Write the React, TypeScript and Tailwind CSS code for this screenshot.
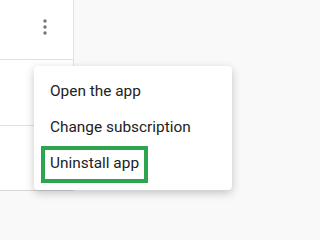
import React from "react";

export default function App() {
  return (
    <div
      className="relative w-full min-w-[269px] h-screen min-h-[229px] bg-[#f9f9f9] overflow-hidden"
      style={{ fontFamily: "Roboto, 'Liberation Sans', sans-serif" }}
    >
      <div className="w-[74px] bg-white border-r border-[#e3e3e3] flex flex-col">
        <div className="h-[60px] border-b border-[#e0e0e0] flex items-start justify-end pr-[26px] pt-[19px]">
          <svg width="4" height="16" viewBox="0 0 4 16">
            <circle cx="2" cy="2" r="1.7" fill="#757575" />
            <circle cx="2" cy="8" r="1.7" fill="#757575" />
            <circle cx="2" cy="14" r="1.7" fill="#757575" />
          </svg>
        </div>
        <div className="h-[66px] border-b border-[#e0e0e0]" />
        <div className="h-[65px] border-b border-[#d6d6d6]" />
      </div>

      <div className="absolute left-[34px] top-[66px] w-[198px] h-[124px] bg-white rounded-[4px] shadow-[0_3px_10px_rgba(0,0,0,0.22)] py-[8px] text-[15.4px] text-[#222222]">
        <div className="h-[36px] flex items-center pl-[16px]">Open the app</div>
        <div className="h-[36px] flex items-center pl-[16px]">Change subscription</div>
        <div className="h-[36px] flex items-center pl-[7px]">
          <span className="h-[37px] flex items-center border-[4px] border-[#2ea44f] px-[5px]">
            Uninstall app
          </span>
        </div>
      </div>
    </div>
  );
}
